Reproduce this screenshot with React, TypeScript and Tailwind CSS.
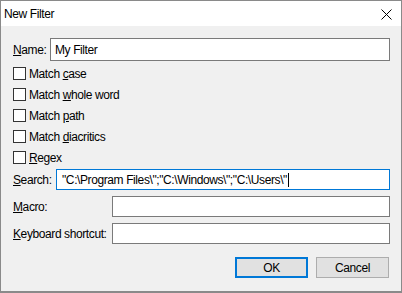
import React from "react"

const font = { fontFamily: '"Liberation Sans", Arial, sans-serif' }

function Box({ children, focused }: { children?: React.ReactNode; focused?: boolean }) {
  return (
    <div
      className={`flex-1 h-[21px] bg-white border flex items-center pl-[5px] whitespace-nowrap overflow-hidden ${
        focused ? "border-[#0078d7]" : "border-[#7a7a7a]"
      }`}
    >
      {children}
    </div>
  )
}

function Check({ children }: { children: React.ReactNode }) {
  return (
    <div className="h-[21px] flex items-center">
      <div className="w-[13px] h-[13px] bg-white border border-[#333333]" />
      <span className="ml-[3px]">{children}</span>
    </div>
  )
}

export default function App() {
  return (
    <div
      style={font}
      className="w-[402px] h-[293px] bg-[#f0f0f0] border border-[#8a8a8a] border-b-2 text-[12px] tracking-[-0.4px] text-black leading-none flex flex-col"
    >
      <div className="h-[25px] bg-white flex items-center justify-between pl-[3px] pr-[9px]">
        <span className="text-[12px]">New Filter</span>
        <svg width="11" height="11" viewBox="0 0 11 11" className="mt-[1px]">
          <path d="M0.5 0.5 L10.5 10.5 M10.5 0.5 L0.5 10.5" stroke="#000" strokeWidth="1" />
        </svg>
      </div>

      <div className="flex flex-col pl-[12px] pr-[11px]">
        <div className="flex items-center mt-[12px] h-[23px]">
          <span className="w-[37px]">
            <u>N</u>ame:
          </span>
          <div className="flex-1 h-[23px] bg-white border border-[#7a7a7a] flex items-center pl-[4px]">
            My Filter
          </div>
        </div>

        <div className="flex flex-col mt-[2px]">
          <Check>
            Match <u>c</u>ase
          </Check>
          <Check>
            Match <u>w</u>hole word
          </Check>
          <Check>
            Match <u>p</u>ath
          </Check>
          <Check>
            Match <u>d</u>iacritics
          </Check>
          <Check>
            <u>R</u>egex
          </Check>
        </div>

        <div className="flex items-center mt-[1px]">
          <span className="w-[43px]">
            <u>S</u>earch:
          </span>
          <Box focused>
            {'"C:\\Program Files\\";"C:\\Windows\\";"C:\\Users\\"'}
            <span className="inline-block w-px h-[14px] bg-black ml-[1px]" />
          </Box>
        </div>

        <div className="flex items-center mt-[6px]">
          <span className="w-[99px]">
            <u>M</u>acro:
          </span>
          <Box />
        </div>

        <div className="flex items-center mt-[6px]">
          <span className="w-[99px]">
            <u>K</u>eyboard shortcut:
          </span>
          <Box />
        </div>

        <div className="flex justify-end gap-[8px] mt-[13px] mr-[1px]">
          <button className="w-[73px] h-[21px] bg-[#e1e1e1] border-2 border-[#0078d7] flex items-center justify-center">
            OK
          </button>
          <button className="w-[73px] h-[21px] bg-[#e1e1e1] border border-[#adadad] flex items-center justify-center">
            Cancel
          </button>
        </div>
      </div>
    </div>
  )
}
